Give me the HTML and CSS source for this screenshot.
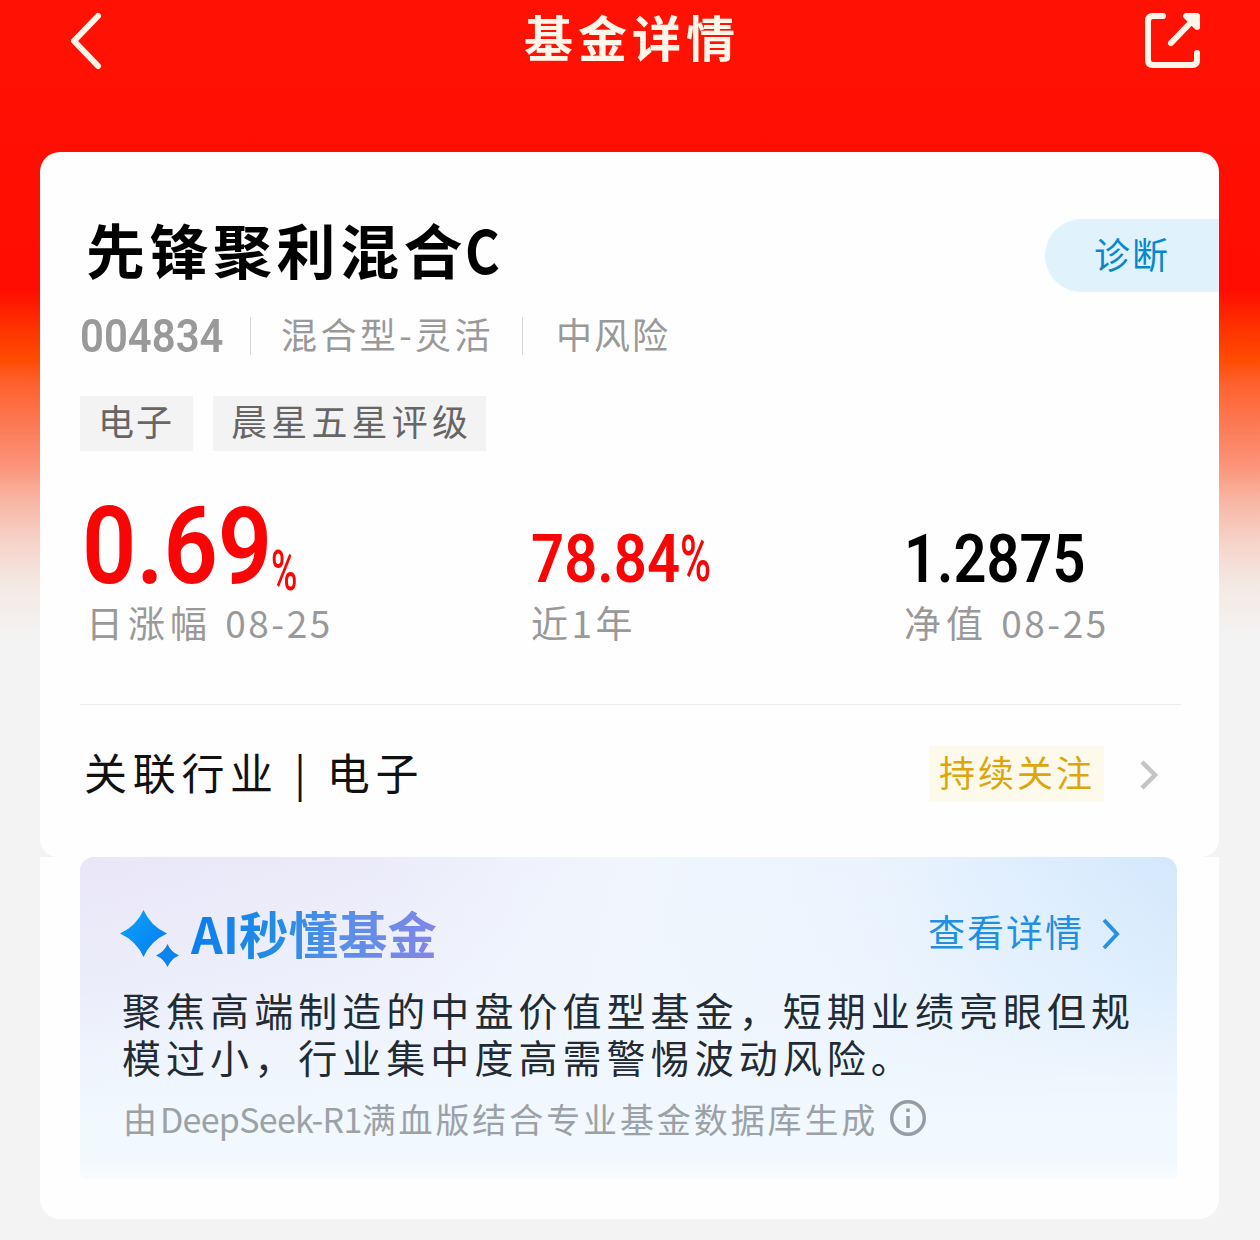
FILE: index.html
```html
<!DOCTYPE html>
<html lang="zh-CN">
<head>
<meta charset="utf-8">
<title>基金详情</title>
<link rel="stylesheet" href="styles.css">
</head>
<body>
<div class="page">
  <header class="topbar">
    <svg class="back" viewBox="0 0 34 58" width="34" height="58"><path d="M29 4 5 29 29 54"/></svg>
    <h1>基金详情</h1>
    <svg class="share" viewBox="0 0 58 58" width="58" height="58"><path d="M19 4H9Q4 4 4 9V48Q4 53 9 53H48Q53 53 53 48V41M27 31 52 5M42 4H53V15L47 9Z"/></svg>
  </header>

  <main>
    <section class="card fund">
      <div class="name-row">
        <h2>先锋聚利混合<span>C</span></h2>
        <a class="diagnose">诊断</a>
      </div>
      <div class="meta">
        <span class="code"><b>004834</b></span>
        <span class="kind">混合型-灵活</span>
        <span class="risk">中风险</span>
      </div>
      <div class="tags"><span>电子</span><span>晨星五星评级</span></div>
      <div class="stats">
        <div class="stat">
          <div class="figure up"><b class="num big">0.69</b><b class="num pct">%</b></div>
          <div class="label">日涨幅 <i>08-25</i></div>
        </div>
        <div class="stat">
          <div class="figure up"><b class="num mid">78.84</b><b class="num pct-mid">%</b></div>
          <div class="label year">近1年</div>
        </div>
        <div class="stat">
          <div class="figure"><b class="num nav">1.2875</b></div>
          <div class="label">净值 <i>08-25</i></div>
        </div>
      </div>
      <div class="industry">
        <span class="industry-name">关联行业 | 电子</span>
        <span class="follow">持续关注</span>
        <svg class="chev grey" viewBox="0 0 20 32" width="20" height="32"><path d="M3 3 16 16 3 29"/></svg>
      </div>
    </section>

    <section class="card ai">
      <div class="ai-box">
        <div class="ai-head">
          <svg class="spark" viewBox="0 0 60 58" width="60" height="58">
            <defs><linearGradient id="sparkFill" x1="0" y1="0" x2="1" y2="1"><stop offset="0" stop-color="#0aa6fb"/><stop offset="1" stop-color="#0879ee"/></linearGradient></defs>
            <path fill="url(#sparkFill)" d="M23.500 0Q30.500 16 47 23.500 30.500 31 23.500 47 16.500 31 0 23.500 16.500 16 23.500 0Z"/>
            <path fill="#0d83ee" d="M47.500 34Q51 42 59 45.500 51 49 47.500 57 44 49 36 45.500 44 42 47.500 34Z"/>
          </svg>
          <h3>AI秒懂基金</h3>
          <a class="more">查看详情</a>
          <svg class="chev blue" viewBox="0 0 20 32" width="20" height="32"><path d="M3 2 16 16 3 30"/></svg>
        </div>
        <p class="summary">聚焦高端制造的中盘价值型基金，短期业绩亮眼但规模过小，行业集中度高需警惕波动风险。</p>
        <div class="source">
          <span>由<i>DeepSeek-R1</i>满血版结合专业基金数据库生成</span>
          <svg viewBox="0 0 38 38" width="38" height="38"><circle cx="19" cy="19" r="16.300"/><path d="M19 17V29M19 9.500V13"/></svg>
        </div>
      </div>
    </section>
  </main>
</div>
</body>
</html>
```
FILE: styles.css
```css
* { box-sizing: border-box; margin: 0; padding: 0; }
body {
  font-family: "Noto Sans CJK SC", "Noto Sans", sans-serif;
  background: #f3f3f3;
}
i { font-style: normal; }
svg { display: block; flex: none; fill: none; }
.page {
  width: 1260px;
  height: 1240px;
  overflow: hidden;
  background: linear-gradient(#ff1204 0, #ff0d02 290px, #ff3000 325px, #ff4a00 358px, #ff6230 385px, #fc7a55 425px, #fb9379 465px, #f8b5a2 500px, #f6d2c8 540px, #f3e9e4 585px, #f3f3f3 635px);
}
.topbar {
  height: 152px;
  padding: 12px 58px 0 69px;
  display: flex;
  justify-content: space-between;
  align-items: flex-start;
}
.topbar svg { stroke: #fff6ea; stroke-width: 6; stroke-linecap: round; stroke-linejoin: round; }
.topbar h1 {
  color: #fff6ea;
  font-size: 49px;
  line-height: 54px;
  letter-spacing: 5px;
  margin: -3px -17px 0 0;
}
main { padding: 0 41px 0 40px; }
.card { background: #fefefe; }
.fund { height: 705px; border-radius: 20px 20px 18px 18px; padding-top: 67px; }
.name-row { height: 72px; display: flex; justify-content: space-between; align-items: center; padding-left: 46px; }
.name-row h2 { font-size: 59px; line-height: 72px; letter-spacing: 4.500px; color: #000; margin-top: -13px; }
.name-row h2 span { display: inline-block; margin-left: -2px; transform: scaleX(.9); transform-origin: left; }
.diagnose {
  width: 174px;
  height: 73px;
  line-height: 69px;
  padding-left: 49px;
  border-radius: 37px 0 0 37px;
  background: #e0f3fd;
  color: #0988cf;
  font-size: 36px;
  letter-spacing: 2px;
}
.meta { display: flex; align-items: center; height: 38px; margin: 26px 0 0 40px; color: #999; font-size: 36px; }
.meta span { height: 38px; line-height: 32px; white-space: nowrap; }
.code { width: 171px; border-right: 1px solid #d6d6d6; }
.code b { display: inline-block; font: 600 46px/38px Roboto, sans-serif; transform: scaleX(.91); transform-origin: left; }
.kind { width: 272px; padding-left: 30px; letter-spacing: 3.400px; border-right: 1px solid #d6d6d6; }
.risk { padding-left: 33px; letter-spacing: 2px; }
.tags { display: flex; gap: 20px; margin: 41px 0 0 40px; }
.tags span {
  height: 55px;
  line-height: 49px;
  padding: 0 14px 0 18px;
  background: #f3f3f3;
  color: #666;
  font-size: 36px;
  white-space: nowrap;
}
.tags span:first-child { width: 113px; letter-spacing: 2px; }
.tags span + span { width: 273px; letter-spacing: 4.200px; }
.stats { display: grid; grid-template-columns: 449px 373px 1fr; margin: 54px 0 0 42px; height: 199px; }
.figure { height: 90px; display: flex; align-items: flex-end; color: #000; }
.up { color: #fa0505; }
.num { font-family: Roboto, sans-serif; font-weight: 600; transform-origin: left bottom; white-space: nowrap; }
.big { font-size: 107px; line-height: 96px; width: 189px; transform: scaleX(.89); }
.pct { font-size: 56px; line-height: 48px; font-weight: 500; transform: scaleX(.64); }
.mid { font-size: 66px; line-height: 70px; width: 149px; transform: scaleX(.88); }
.pct-mid { font-size: 64px; line-height: 70px; transform: scaleX(.66); font-weight: 500; }
.nav { font-size: 66px; line-height: 70px; transform: scaleX(.875); }
.label { color: #999; font-size: 37px; line-height: 54px; letter-spacing: 5px; white-space: nowrap; padding-left: 4px; }
.stat + .stat .label { padding-left: 0; }
.stat .year { letter-spacing: 3.500px; }
.label i { letter-spacing: 2.500px; }
.industry { height: 150px; margin: 0 38px 0 40px; padding: 0 22px 12px 4px; border-top: 1px solid #ececec; display: flex; align-items: center; }
.industry-name { flex: 1; color: #111; font-size: 43px; letter-spacing: 5.700px; margin-top: -6px; }
.follow { width: 175px; height: 56px; line-height: 51px; padding-left: 10px; background: #fdfaeb; color: #dca70c; font-size: 36px; letter-spacing: 3px; margin-right: 35px; }
.chev { stroke-width: 4.500; }
.grey { stroke: #c4c4c4; margin-top: 3px; }
.blue { stroke: #2493e6; stroke-width: 4; }
.ai { height: 362px; border-radius: 0 0 20px 20px; padding: 0 42px 0 40px; }
.ai-box {
  height: 322px;
  border-radius: 14px 14px 6px 6px;
  padding: 40px 20px 0 40px;
  background:
    linear-gradient(to bottom, rgba(240,247,254,0) 0, rgba(240,247,254,.4) 130px, #f0f7fe 240px, #f2f9fe 305px, #f8fcfe 322px),
    linear-gradient(100deg, #e9e6f8 0, #ecebfa 25%, #f1f6fe 48%, #e9f3fe 70%, #cfe6fd 100%);
}
.ai-head { height: 76px; display: flex; align-items: center; }
.spark { margin-top: 8px; }
.ai-head h3 {
  flex: 1;
  margin: -4px 0 0 11px;
  font-size: 49.500px;
  line-height: 72px;
  color: transparent;
  background: linear-gradient(100deg, #087cf0 0, #238ce4 90px, #568fe8 150px, #8186e8 245px);
  background-clip: text;
  -webkit-background-clip: text;
}
.more { color: #218fe2; font-size: 37px; letter-spacing: 2px; line-height: 60px; margin: -8px 17px 0 0; }
.ai-head .blue { margin: -3px 36px 0 0; }
.summary { font-size: 39px; line-height: 47px; letter-spacing: 5.050px; color: #222b33; margin: 13px -20px 0 2px; }
.source { display: flex; align-items: center; gap: 11px; height: 54px; margin: 11px 0 0 3px; color: #9aa2a8; font-size: 34px; white-space: nowrap; letter-spacing: 2.900px; }
.source i { letter-spacing: -.7px; }
.source svg { stroke: #929da8; stroke-width: 3.500; }
```
